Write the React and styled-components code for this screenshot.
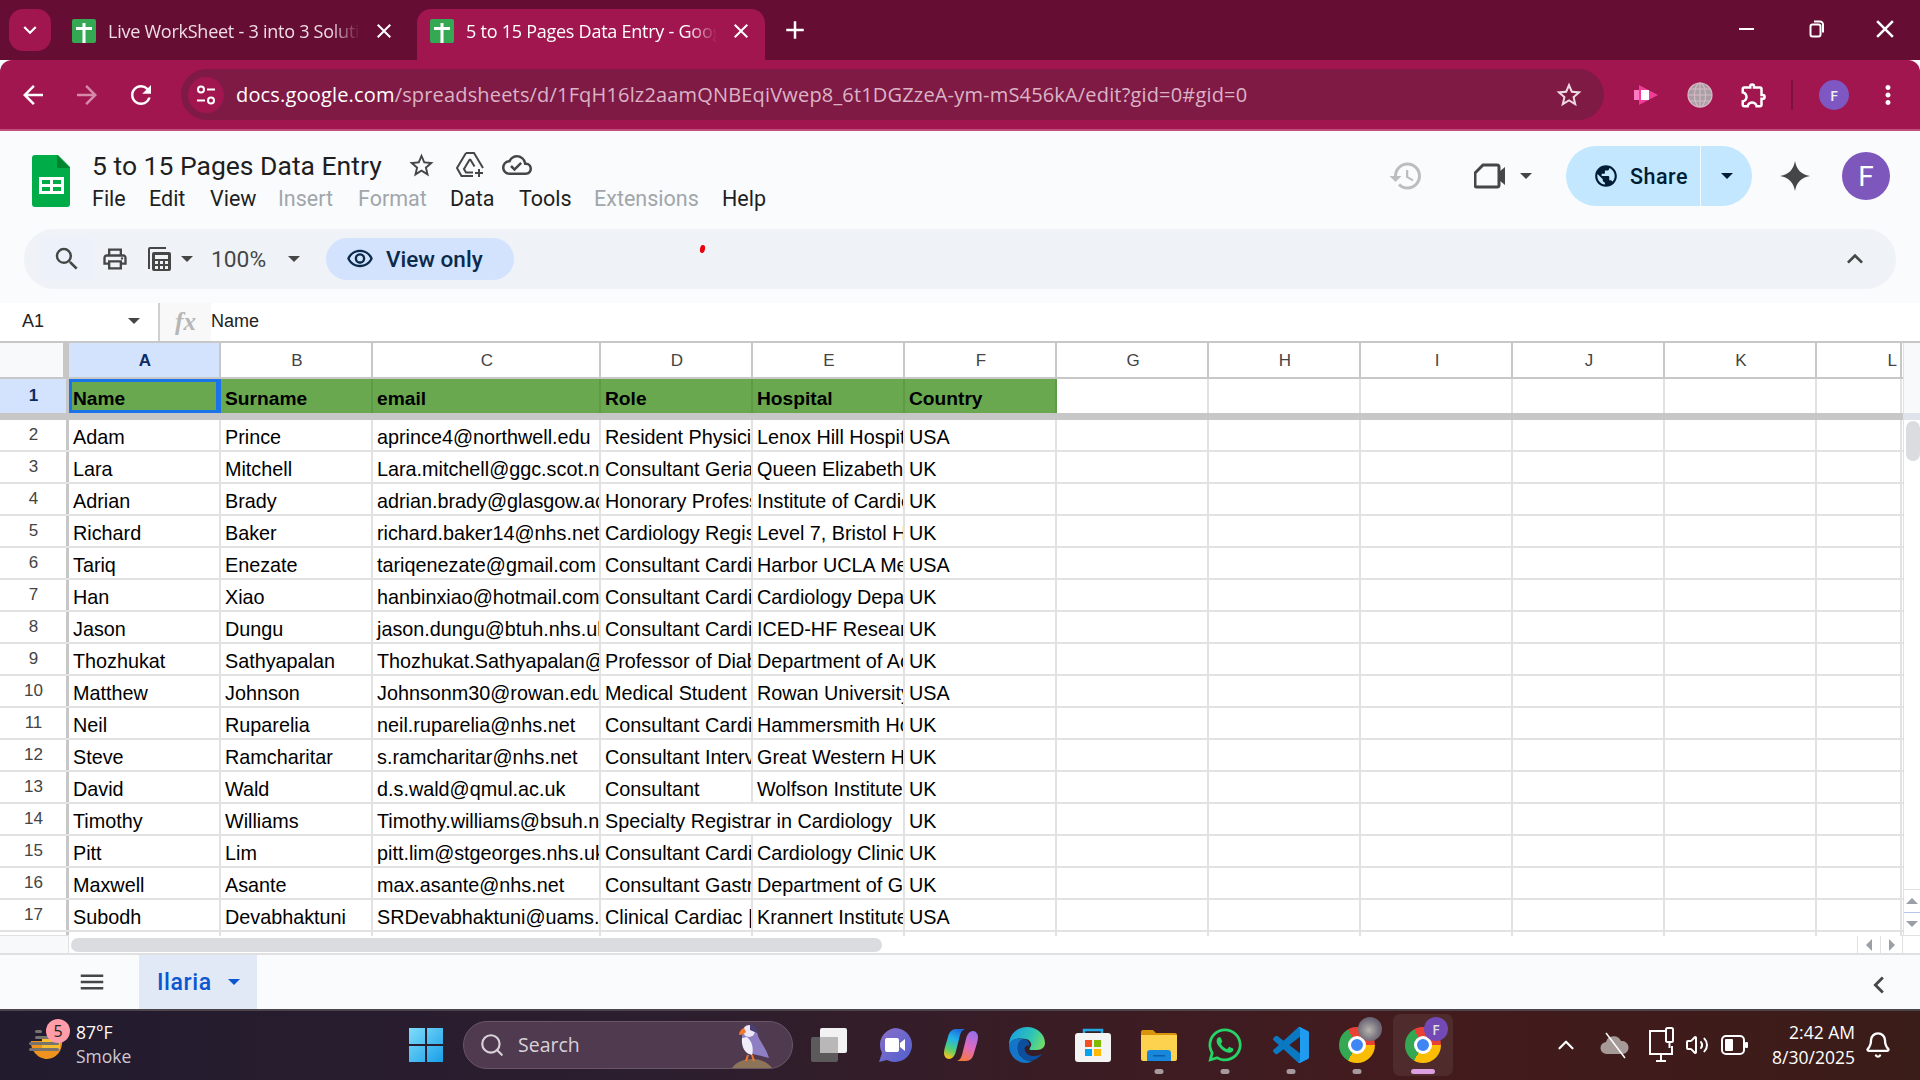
import React from 'react';
import styled, { createGlobalStyle } from 'styled-components';
import {
  MdAdd, MdArrowBack, MdArrowForward, MdClose, MdHistory, MdKeyboardArrowDown, MdKeyboardArrowLeft,
  MdKeyboardArrowUp, MdMenu, MdMoreVert, MdOutlineCloudDone, MdOutlineExtension,
  MdOutlinePrint, MdOutlineStarBorder, MdOutlineVisibility, MdPublic, MdRefresh, MdSearch, MdStarBorder,
} from 'react-icons/md';
import { FaWhatsapp } from 'react-icons/fa';
import { Bell, ChevronUp, Search, Volume2 } from 'lucide-react';

const UI_FONT = '"Open Sans", "Noto Sans", sans-serif';
const DOC_FONT = 'Roboto, "Noto Sans", sans-serif';
const CELL_FONT = '"Liberation Sans", Arial, sans-serif';

const GlobalStyle = createGlobalStyle`
  html, body { margin: 0; padding: 0; background: #fff; }
  * { box-sizing: border-box; }
`;

const COLUMNS = [
  ['A', 152], ['B', 152], ['C', 228], ['D', 152], ['E', 152], ['F', 152],
  ['G', 152], ['H', 152], ['I', 152], ['J', 152], ['K', 152], ['L', 85],
];

const HEADINGS = ['Name', 'Surname', 'email', 'Role', 'Hospital', 'Country'];

const PEOPLE = [
  ['Adam', 'Prince', 'aprince4@northwell.edu', 'Resident Physician', 'Lenox Hill Hospital', 'USA'],
  ['Lara', 'Mitchell', 'Lara.mitchell@ggc.scot.nhs.uk', 'Consultant Geriatrician', 'Queen Elizabeth University', 'UK'],
  ['Adrian', 'Brady', 'adrian.brady@glasgow.ac.uk', 'Honorary Professor', 'Institute of Cardiovascular', 'UK'],
  ['Richard', 'Baker', 'richard.baker14@nhs.net', 'Cardiology Registrar', 'Level 7, Bristol Heart', 'UK'],
  ['Tariq', 'Enezate', 'tariqenezate@gmail.com', 'Consultant Cardiologist', 'Harbor UCLA Medical', 'USA'],
  ['Han', 'Xiao', 'hanbinxiao@hotmail.com', 'Consultant Cardiologist', 'Cardiology Department', 'UK'],
  ['Jason', 'Dungu', 'jason.dungu@btuh.nhs.uk', 'Consultant Cardiologist', 'ICED-HF Research', 'UK'],
  ['Thozhukat', 'Sathyapalan', 'Thozhukat.Sathyapalan@hull.ac.uk', 'Professor of Diabetes', 'Department of Academic', 'UK'],
  ['Matthew', 'Johnson', 'Johnsonm30@rowan.edu', 'Medical Student', 'Rowan University', 'USA'],
  ['Neil', 'Ruparelia', 'neil.ruparelia@nhs.net', 'Consultant Cardiologist', 'Hammersmith Hospital', 'UK'],
  ['Steve', 'Ramcharitar', 's.ramcharitar@nhs.net', 'Consultant Interventional', 'Great Western Hospital', 'UK'],
  ['David', 'Wald', 'd.s.wald@qmul.ac.uk', 'Consultant', 'Wolfson Institute', 'UK'],
  ['Timothy', 'Williams', 'Timothy.williams@bsuh.nhs.uk', 'Specialty Registrar in Cardiology', '', 'UK'],
  ['Pitt', 'Lim', 'pitt.lim@stgeorges.nhs.uk', 'Consultant Cardiologist', 'Cardiology Clinic', 'UK'],
  ['Maxwell', 'Asante', 'max.asante@nhs.net', 'Consultant Gastroenterologist', 'Department of Gastro', 'UK'],
  ['Subodh', 'Devabhaktuni', 'SRDevabhaktuni@uams.edu', 'Clinical Cardiac | Electrophysiology', 'Krannert Institute', 'USA'],
];

const Page = styled.div`
  width: 1920px;
  height: 1080px;
  display: flex;
  flex-direction: column;
  overflow: hidden;
  background: #f9fbfd;
`;

/* browser chrome */
const TabStrip = styled.div`
  height: 60px;
  flex: none;
  background: #650d33;
  display: flex;
  align-items: flex-end;
  color: #fff;
  font-family: ${UI_FONT};
`;

const TabListButton = styled.div`
  width: 42px;
  height: 42px;
  margin: 0 9px 9px 9px;
  border-radius: 14px;
  background: #a1164f;
  display: flex;
  align-items: center;
  justify-content: center;
  font-size: 26px;
`;

const Tab = styled.div`
  width: ${p => (p.$active ? 348 : 357)}px;
  height: 51px;
  padding: 0 12px 8px ${p => (p.$active ? 13 : 12)}px;
  border-radius: 14px 14px 0 0;
  background: ${p => (p.$active ? '#a1164f' : 'transparent')};
  display: flex;
  align-items: center;
  color: ${p => (p.$active ? '#fff' : '#f0dde5')};
  svg.close { flex: none; font-size: 24px; color: #fff; }
`;

const TabTitle = styled.span`
  width: ${p => p.$w}px;
  margin-left: 12px;
  margin-right: ${p => p.$gap}px;
  font-size: 18px;
  letter-spacing: -0.25px;
  white-space: nowrap;
  overflow: hidden;
  -webkit-mask-image: linear-gradient(90deg, #000 88%, transparent);
  mask-image: linear-gradient(90deg, #000 88%, transparent);
`;

const NewTab = styled.div`
  width: 36px;
  height: 36px;
  margin: 0 0 12px 12px;
  font-size: 30px;
  display: flex;
  align-items: center;
  justify-content: center;
`;

const WindowControls = styled.div`
  margin-left: auto;
  height: 60px;
  display: flex;
  align-items: center;
  padding: 0 20px 2px 0;
  svg:nth-child(2) { margin: 0 45px 0 54px; }
`;

const Toolbar = styled.div`
  height: 71px;
  flex: none;
  background: #a1164f;
  border-radius: 12px 12px 0 0;
  border-bottom: 2px solid #c04f7c;
  display: flex;
  align-items: center;
  padding: 0 0 0 11px;
  gap: 10px;
  color: #fff;
`;

const NavButton = styled.div`
  width: 44px;
  height: 44px;
  display: flex;
  align-items: center;
  justify-content: center;
  font-size: 30px;
  color: ${p => (p.$dim ? '#d58aa8' : '#fff')};
`;

const Omnibox = styled.div`
  width: 1423px;
  height: 51px;
  margin: 0 10px 0 8px;
  border-radius: 26px;
  background: #7f1a45;
  display: flex;
  align-items: center;
  padding: 0 20px 0 7px;
`;

const SiteInfo = styled.div`
  width: 36px;
  height: 36px;
  border-radius: 50%;
  background: #a1164f;
  display: flex;
  align-items: center;
  justify-content: center;
  flex: none;
`;

const Url = styled.div`
  margin-left: 12px;
  font-family: ${UI_FONT};
  font-size: 20px;
  letter-spacing: 0.17px;
  color: #dbb3c5;
  white-space: nowrap;
  b { font-weight: 400; color: #fff; }
`;

const OmniStar = styled(MdStarBorder)`
  margin-left: auto;
  font-size: 30px;
  color: #eed8e1;
`;

const ToolbarDivider = styled.div`
  width: 2px;
  height: 30px;
  background: #7d1040;
  margin: 0 9px 0 5px;
`;

const SmallAvatar = styled.div`
  width: 30px;
  height: 30px;
  margin: 0 7px;
  border-radius: 50%;
  background: #7e57c2;
  color: #eee;
  font: 600 15px ${UI_FONT};
  display: flex;
  align-items: center;
  justify-content: center;
`;

/* docs header */
const DocHeader = styled.header`
  height: 98px;
  flex: none;
  display: flex;
  padding: 24px 30px 0 32px;
`;

const DocTitleBlock = styled.div`
  margin-left: 22px;
  display: flex;
  flex-direction: column;
`;

const TitleRow = styled.div`
  height: 36px;
  margin-top: -8px;
  display: flex;
  align-items: center;
  color: #444746;
  svg { flex: none; }
`;

const DocTitle = styled.div`
  font: 400 26.5px ${DOC_FONT};
  color: #1f1f1f;
  width: 300px;
  white-space: nowrap;
  margin-right: 15px;
`;

const MenuBar = styled.nav`
  display: flex;
  margin-top: 3px;
`;

const MenuItem = styled.span`
  width: ${p => p.$w}px;
  font: 400 21.5px ${DOC_FONT};
  color: ${p => (p.$disabled ? '#a1a6ab' : '#1f1f1f')};
`;

const HeaderActions = styled.div`
  margin-left: auto;
  display: flex;
  align-items: center;
  height: 60px;
  margin-top: -9px;
  color: #444746;
`;

const Spacer = styled.span`
  width: ${p => p.$w}px;
  flex: none;
`;

const Caret = styled.span`
  width: 0;
  height: 0;
  border-left: ${p => p.$size || 6}px solid transparent;
  border-right: ${p => p.$size || 6}px solid transparent;
  border-top: ${p => p.$size || 6}px solid ${p => p.$color || '#444746'};
  flex: none;
`;

const ShareButton = styled.div`
  width: 186px;
  height: 60px;
  margin: 0 27px 0 34px;
  border-radius: 30px;
  background: #c2e7ff;
  color: #001d35;
  display: flex;
  align-items: center;
`;

const ShareLabel = styled.div`
  width: 135px;
  height: 100%;
  border-right: 1px solid #f3fbff;
  padding-left: 27px;
  display: flex;
  align-items: center;
  gap: 11px;
  font: 500 21.5px ${DOC_FONT};
  letter-spacing: 0.5px;
`;

const ShareCaret = styled.div`
  flex: 1;
  display: flex;
  justify-content: center;
`;

const ProfileBadge = styled.div`
  width: 48px;
  height: 48px;
  margin-left: 31px;
  border-radius: 50%;
  background: #7e57bd;
  color: #fff;
  font: 400 28px ${DOC_FONT};
  display: flex;
  align-items: center;
  justify-content: center;
`;

/* sheets toolbar */
const ActionBar = styled.div`
  position: relative;
  height: 60px;
  flex: none;
  margin: 0 24px;
  border-radius: 30px;
  background: #eff3f8;
  display: flex;
  align-items: center;
  color: #444746;
`;

const SearchTool = styled.div`
  width: 53px;
  height: 44px;
  margin-left: 16px;
  background: #edf2fa;
  display: flex;
  align-items: center;
  justify-content: center;
`;

const ZoomLabel = styled.span`
  width: 77px;
  margin-left: 18px;
  font: 400 22.8px ${DOC_FONT};
  color: #444746;
`;

const ViewOnly = styled.div`
  width: 188px;
  height: 42px;
  margin-left: 26px;
  border-radius: 21px;
  background: #d3e3fd;
  color: #0b2a4c;
  display: flex;
  align-items: center;
  padding-left: 20px;
  gap: 12px;
  font: 500 22.5px ${DOC_FONT};
`;

const RedMark = styled.span`
  position: absolute;
  left: 676px;
  top: 16px;
  width: 5px;
  height: 8px;
  border-radius: 50%;
  background: #e8000d;
  transform: rotate(12deg);
`;

const CollapseBar = styled(MdKeyboardArrowUp)`
  margin-left: auto;
  margin-right: 25px;
  font-size: 32px;
`;

/* formula bar */
const FormulaBar = styled.div`
  height: 40px;
  flex: none;
  margin-top: 14px;
  background: #fff;
  border-bottom: 2px solid #c7c7c7;
  display: flex;
  align-items: center;
  font: 400 18px ${CELL_FONT};
  color: #222;
`;

const NameBox = styled.div`
  width: 158px;
  height: 100%;
  padding: 0 18px 2px 22px;
  display: flex;
  align-items: center;
  justify-content: space-between;
`;

const FxBox = styled.div`
  width: 53px;
  height: 100%;
  background: #f8f8f8;
  border-left: 2px solid #d0d0d0;
  background-clip: padding-box;
  display: flex;
  align-items: center;
  justify-content: center;
  font: italic 700 25px "Liberation Serif", serif;
  color: #b6b6b6;
`;

const FormulaText = styled.span`
  margin: -1px 0 0 0;
`;

/* grid */
const GridArea = styled.div`
  height: 592px;
  flex: none;
  display: flex;
  background: #fff;
  font-family: ${CELL_FONT};
`;

const Sheet = styled.div`
  width: 1903px;
  flex: none;
`;

const Row = styled.div`
  display: flex;
  height: ${p => p.$h}px;
  border-bottom: ${p => p.$line || '2px solid #e2e2e2'};
`;

const RowNumber = styled.div`
  width: 69px;
  flex: none;
  border-right: ${p => (p.$thick ? '6px solid #c7c7c7' : '3px solid #c7c7c7')};
  background: ${p => (p.$on ? '#d3e3fd' : '#fff')};
  display: flex;
  align-items: center;
  justify-content: center;
  padding: 0 0 0 1px;
  font-size: 17px;
  font-weight: ${p => (p.$on ? 700 : 400)};
  color: ${p => (p.$on ? '#0b2a66' : '#444')};
  ${p => p.$corner && 'background: #f8f9fa;'}
`;

const ColumnHead = styled.div`
  flex: none;
  width: ${p => p.$w}px;
  border-right: 2px solid #c7c7c7;
  background: ${p => (p.$on ? '#d3e3fd' : '#fff')};
  display: flex;
  align-items: center;
  justify-content: ${p => (p.$end ? 'flex-end' : 'center')};
  padding: 2px ${p => (p.$end ? 3 : 0)}px 0 2px;
  font-size: 17px;
  font-weight: ${p => (p.$on ? 700 : 400)};
  color: ${p => (p.$on ? '#0b2a66' : '#444')};
`;

const Cell = styled.div`
  flex: none;
  width: ${p => p.$w}px;
  height: 100%;
  padding: ${p => (p.$head ? 6 : 4)}px 0 0 4px;
  border-right: 2px solid ${p => (p.$open ? 'transparent' : p.$head ? '#5f9a47' : '#e2e2e2')};
  background: ${p => (p.$head ? '#6aa84f' : '#fff')};
  font-size: ${p => (p.$head ? 19.2 : 19.8)}px;
  font-weight: ${p => (p.$head ? 700 : 400)};
  line-height: 27px;
  color: #000;
  white-space: nowrap;
  overflow: ${p => (p.$spill ? 'visible' : 'hidden')};
  position: relative;
  z-index: ${p => (p.$spill ? 1 : 0)};
  ${p => p.$selected && 'box-shadow: inset 0 0 0 3px #1a73e8; border-right-color: #1a73e8;'}
`;

const VScroll = styled.div`
  flex: 1;
  display: flex;
  flex-direction: column;
  border-left: 1px solid #e1e1e1;
`;

const VScrollCap = styled.div`
  background: #f8f9fa;
  border-bottom: 7px solid #dfe3eb;
  height: 77px;
`;

const VScrollThumb = styled.div`
  width: 14px;
  height: 40px;
  margin: 1px 0 0 2px;
  border-radius: 7px;
  background: #dadce0;
`;

const VScrollArrow = styled.div`
  height: 23px;
  display: flex;
  align-items: center;
  justify-content: center;
  margin-top: ${p => (p.$first ? 'auto' : 0)};
  border-top: 1px solid ${p => (p.$first ? '#e1e1e1' : '#b9c4ec')};
`;

const TurnedCaret = styled(Caret)`
  transform: rotate(${p => p.$turn || 180}deg);
`;

const HScroll = styled.div`
  height: 20px;
  flex: none;
  background: #fff;
  border-top: 1px solid #e1e1e1;
  border-bottom: 2px solid #e0e0e0;
  display: flex;
  align-items: center;
`;

const HScrollCorner = styled.div`
  width: 69px;
  height: 100%;
  background: #f8f9fa;
  border-right: 1px solid #e1e1e1;
`;

const HScrollThumb = styled.div`
  width: 811px;
  height: 14px;
  margin-left: 2px;
  border-radius: 7px;
  background: #dadce0;
`;

const HScrollArrow = styled.div`
  width: 23px;
  height: 100%;
  border-left: 1px solid #e1e1e1;
  display: flex;
  align-items: center;
  justify-content: center;
  margin-left: ${p => (p.$first ? 'auto' : 0)};
  &:last-child { margin-right: 17px; border-right: 1px solid #e1e1e1; }
`;

/* sheet tabs */
const SheetTabs = styled.div`
  height: 54px;
  flex: none;
  background: #f9fbfd;
  display: flex;
  align-items: center;
`;

const AllSheets = styled(MdMenu)`
  margin-left: 77px;
  font-size: 30px;
  color: #444746;
`;

const SheetTab = styled.div`
  width: 118px;
  height: 100%;
  margin-left: 32px;
  padding-left: 18px;
  background: #e1e9f7;
  color: #0b57d0;
  display: flex;
  align-items: center;
  gap: 16px;
  font: 500 23px ${DOC_FONT};
  letter-spacing: 0.6px;
`;

const ExploreArrow = styled(MdKeyboardArrowLeft)`
  margin-left: auto;
  margin-right: 24px;
  margin-top: 6px;
  font-size: 34px;
  color: #444746;
`;

/* windows taskbar */
const Taskbar = styled.footer`
  height: 72px;
  flex: none;
  border-top: 2px solid #4b444a;
  padding-bottom: 2px;
  background: linear-gradient(90deg, #221b2e 0%, #2c1e2e 35%, #3d1c22 60%, #431b1d 75%, #3a1c18 100%);
  display: flex;
  align-items: center;
  color: #fff;
  font-family: ${UI_FONT};
`;

const Weather = styled.div`
  position: relative;
  width: 408px;
  height: 100%;
  flex: none;
  padding-left: 28px;
  display: flex;
  align-items: center;
  gap: 10px;
`;

const WeatherBadge = styled.span`
  position: absolute;
  left: 46px;
  top: 8px;
  width: 24px;
  height: 24px;
  border-radius: 50%;
  background: #ff9da8;
  color: #222;
  font-size: 16px;
  display: flex;
  align-items: center;
  justify-content: center;
`;

const WeatherText = styled.div`
  font-size: 17.5px;
  line-height: 24px;
  margin-top: -2px;
  span { display: block; color: #cfc8d0; }
`;

const StartSlot = styled.div`
  width: 36px;
  flex: none;
  display: flex;
`;

const SearchBox = styled.div`
  position: relative;
  width: 330px;
  height: 48px;
  margin: 0 3px 1px 19px;
  flex: none;
  border-radius: 24px;
  border: 1px solid #6a5666;
  background: #4f3a50;
  display: flex;
  align-items: center;
  padding-left: 15px;
  gap: 13px;
  font-size: 19.5px;
  color: #d9d2d8;
`;

const PuffinSlot = styled.svg`
  position: absolute;
  right: 16px;
  bottom: 0;
`;

const TaskSlot = styled.div`
  position: relative;
  width: 66px;
  height: 62px;
  display: flex;
  align-items: center;
  justify-content: center;
  flex: none;
  ${p => p.$active && 'background: rgba(255,255,255,.07); border-radius: 7px; width: 60px; margin: 0 3px;'}
`;

const RunningDot = styled.span`
  position: absolute;
  left: 50%;
  bottom: 2px;
  transform: translateX(-50%);
  width: ${p => (p.$active ? 24 : 9)}px;
  height: 5px;
  border-radius: 3px;
  background: ${p => (p.$active ? '#dc9fe2' : '#a79a9e')};
`;

const ChromeMark = styled.span`
  position: relative;
  width: 36px;
  height: 36px;
  border-radius: 50%;
  background: conic-gradient(#e94235 0 90deg, #fbbc04 90deg 210deg, #34a853 210deg 330deg, #e94235 330deg 360deg);
  display: block;
  &::after {
    content: '';
    position: absolute;
    left: 9px;
    top: 9px;
    width: 18px;
    height: 18px;
    border-radius: 50%;
    background: #3f85f4;
    border: 3px solid #fff;
    box-sizing: border-box;
  }
`;

const ChromeProfile = styled.span`
  position: absolute;
  z-index: 1;
  right: ${p => p.$right}px;
  top: 3px;
  width: 24px;
  height: 24px;
  border-radius: 50%;
  background: ${p => p.$bg};
  color: #ddd;
  font: 600 14px ${UI_FONT};
  display: flex;
  align-items: center;
  justify-content: center;
`;

const Tray = styled.div`
  flex: 1;
  height: 100%;
  display: flex;
  align-items: center;
  padding-left: 95px;
  color: #fff;
`;

const TrayIcon = styled.div`
  width: ${p => p.$w}px;
  margin-left: ${p => p.$gap || 0}px;
  display: flex;
  justify-content: center;
  flex: none;
`;

const Clock = styled.div`
  width: 94px;
  flex: none;
  text-align: right;
  font-size: 17.5px;
  line-height: 25px;
  white-space: nowrap;
  margin-top: -1px;
`;

const BellSlot = styled.div`
  width: 46px;
  flex: none;
  display: flex;
  justify-content: center;
`;

const SheetFavicon = () => (
  <svg width="24" height="24" viewBox="0 0 24 24" style={{ flex: 'none' }}>
    <rect width="24" height="24" rx="2" fill="#34a853" />
    <rect x="10.5" y="4" width="3" height="20" fill="#fff" />
    <rect x="4" y="8" width="16" height="3" fill="#fff" />
  </svg>
);

const SheetsLogo = () => (
  <svg width="38" height="52" viewBox="0 0 38 52" style={{ flex: 'none' }}>
    <path d="M3 0h23l12 12v37a3 3 0 0 1-3 3H3a3 3 0 0 1-3-3V3a3 3 0 0 1 3-3Z" fill="#00ac47" />
    <path d="M25 0l13 13H25Z" fill="#00832d" />
    <path d="M7 22h25v17H7Zm3 3v4h8v-4Zm11 0v4h8v-4Zm-11 7v4h8v-4Zm11 0v4h8v-4Z" fill="#fff" fillRule="evenodd" />
  </svg>
);

const SiteTune = () => (
  <svg width="24" height="24" viewBox="0 0 24 24" fill="none" stroke="#fff" strokeWidth="2">
    <circle cx="7" cy="6.5" r="3" />
    <path d="M13 6.5h8M3 17.5h8" />
    <circle cx="17" cy="17.5" r="3" />
  </svg>
);

const Minimize = () => (
  <svg width="16" height="16" viewBox="0 0 16 16"><rect x="0" y="7" width="15" height="2" fill="#fff" /></svg>
);

const Restore = () => (
  <svg width="16" height="18" viewBox="0 0 16 18" fill="none" stroke="#fff" strokeWidth="2">
    <rect x="1.5" y="4.5" width="10" height="12" rx="2" />
    <path d="M5 1.5h6a3 3 0 0 1 3 3v8" />
  </svg>
);

const Recorder = () => (
  <svg width="26" height="26" viewBox="0 0 26 26">
    <path d="M1 8h14v10H1Z" fill="#ff78c2" />
    <path d="M6 3l0 20 19-10Z" fill="#ef3d9a" />
    <rect x="8" y="8" width="8" height="10" fill="#fff" />
  </svg>
);

const GlobeExt = () => (
  <svg width="26" height="26" viewBox="0 0 26 26" fill="none" stroke="#d7b9c5" strokeWidth="1.2">
    <circle cx="13" cy="13" r="12" fill="#a8a0a4" />
    <ellipse cx="13" cy="13" rx="5.5" ry="12" />
    <path d="M1 13h24M3 7h20M3 19h20M13 1v24" />
  </svg>
);

const DriveAdd = () => (
  <svg width="30" height="30" viewBox="0 0 30 30" fill="none" stroke="#444746" strokeWidth="2" style={{ marginLeft: 19 }}>
    <path d="M11 3h8l9 15M11 3 2 18l4.500 8H18" />
    <path d="M15 9 9 19l2 3.500h7M15 9l4.500 7.500" />
    <path d="M24 19v8M20 23h8" />
  </svg>
);

const CalcIcon = () => (
  <svg width="28" height="28" viewBox="0 0 28 28">
    <path d="M3 24V4a2 2 0 0 1 2-2h16v2H5v20Z" fill="#444746" />
    <rect x="7" y="7" width="19" height="19" rx="2" fill="#444746" />
    <rect x="10" y="10" width="13" height="4" fill="#eff3f8" />
    <path d="M10 16h3v3h-3Zm5 0h3v3h-3Zm5 0h3v3h-3Zm-10 5h3v3h-3Zm5 0h3v3h-3Zm5 0h3v3h-3Z" fill="#eff3f8" />
  </svg>
);

const MeetCamera = () => (
  <svg width="32" height="26" viewBox="0 0 32 26" fill="none">
    <path d="M9 2h14a2 2 0 0 1 2 2v18a2 2 0 0 1-2 2H3a2 2 0 0 1-2-2V10Z" stroke="#444746" strokeWidth="3" />
    <path d="M25 9l6-5v18l-6-5Z" fill="#444746" />
  </svg>
);

const Spark = () => (
  <svg width="32" height="32" viewBox="0 0 32 32">
    <path d="M16 1c1.5 8.5 6 13.500 15 15-9 1.500-13.500 6.500-15 15-1.500-8.500-6-13.500-15-15 9-1.500 13.500-6.500 15-15Z" fill="#444746" />
  </svg>
);

const WeatherIcon = () => (
  <svg width="38" height="36" viewBox="0 0 38 36">
    <path d="M3 14h31c1 9-6 18-15 18S2 23 3 14Z" fill="#f0921e" />
    <path d="M14 12h18v10H14Z" fill="#f7bd30" />
    <g fill="#77736f">
      <rect x="7" y="3" width="7" height="3" rx="1.500" />
      <rect x="7" y="9" width="16" height="3" rx="1.500" />
      <rect x="1" y="15" width="30" height="3" rx="1.500" />
      <rect x="1" y="21" width="30" height="3" rx="1.500" />
    </g>
  </svg>
);

const WindowsLogo = () => (
  <svg width="36" height="36" viewBox="0 0 36 36">
    <defs>
      <linearGradient id="win" x1="0" y1="0" x2="1" y2="1">
        <stop offset="0" stopColor="#7fdcfb" />
        <stop offset="1" stopColor="#1a9fe8" />
      </linearGradient>
    </defs>
    <path d="M1 1h16v16H1Zm18 0h16v16H19ZM1 19h16v16H1Zm18 0h16v16H19Z" fill="url(#win)" />
  </svg>
);

const Puffin = () => (
  <PuffinSlot width="48" height="46" viewBox="0 0 48 46">
    <path d="M4 46c4-6 12-9 20-9s16 3 20 9Z" fill="#8d7358" />
    <path d="M14 14c0-6 4-10 8-10s7 4 8 10c3 7 9 14 11 22-7-2-12-3-17-4-6-2-10-10-10-18Z" fill="#8e7fc4" />
    <path d="M14 16c-1 9 3 16 10 17 2-6 0-14-5-18Z" fill="#f0eef8" />
    <circle cx="21" cy="9" r="6" fill="#ece6f5" />
    <path d="M22 2c5 1 7 4 7 9l-7-3Z" fill="#4a3f73" />
    <path d="M16 6c-3 1-5 4-5 7 3 0 5-1 7-3Z" fill="#f4772a" />
    <path d="M20 33l-2 6m6-6 2 6" stroke="#f4772a" strokeWidth="2" />
  </PuffinSlot>
);

const TaskView = () => (
  <svg width="36" height="34" viewBox="0 0 36 34">
    <rect x="0" y="9" width="27" height="25" rx="2" fill="#5c5a5b" />
    <rect x="9" y="0" width="27" height="25" rx="2" fill="#f2f2f2" />
    <rect x="9" y="9" width="18" height="16" fill="#b9b7b8" />
  </svg>
);

const MeetIcon = () => (
  <svg width="34" height="34" viewBox="0 0 34 34">
    <defs>
      <linearGradient id="meet" x1="0" y1="0" x2="1" y2="1">
        <stop offset="0" stopColor="#8a70c9" />
        <stop offset="1" stopColor="#5060cf" />
      </linearGradient>
    </defs>
    <path d="M17 0a17 17 0 1 1-8 32l-8 2 3-9A17 17 0 0 1 17 0Z" fill="url(#meet)" />
    <rect x="7" y="10" width="14" height="14" rx="2" fill="#fff" />
    <path d="M22 15l5-4v12l-5-4Z" fill="#fff" />
  </svg>
);

const CopilotIcon = () => (
  <svg width="34" height="34" viewBox="0 0 34 34">
    <defs>
      <linearGradient id="copL" x1="0.6" y1="0" x2="0.3" y2="1">
        <stop offset="0" stopColor="#1b6fe0" />
        <stop offset=".35" stopColor="#22b4e8" />
        <stop offset=".7" stopColor="#53cf72" />
        <stop offset="1" stopColor="#f6c21c" />
      </linearGradient>
      <linearGradient id="copR" x1="0.6" y1="0" x2="0.3" y2="1">
        <stop offset="0" stopColor="#9a6fe8" />
        <stop offset=".5" stopColor="#e069c0" />
        <stop offset="1" stopColor="#f5793c" />
      </linearGradient>
    </defs>
    <path d="M12 1h9c-3 1-4 3-5 6l-4 16c-1 4-3 8-7 8-3 0-5-3-5-6 0-2 .5-4 1-6l3-10C5 4 8 1 12 1Z" fill="url(#copL)" />
    <path d="M22 33h-9c3-1 4-3 5-6l4-16c1-4 3-8 7-8 3 0 5 3 5 6 0 2-.5 4-1 6l-3 10C29 30 26 33 22 33Z" fill="url(#copR)" />
  </svg>
);

const EdgeIcon = () => (
  <svg width="36" height="36" viewBox="0 0 36 36">
    <defs>
      <linearGradient id="edgeA" x1="0" y1="0.3" x2="1" y2="0.6">
        <stop offset="0" stopColor="#1b9de2" />
        <stop offset=".6" stopColor="#2ec5b5" />
        <stop offset="1" stopColor="#6fdc6a" />
      </linearGradient>
    </defs>
    <path d="M0 18C0 7 8 0 18 0c10 0 18 7 18 16 0 4-3 7-8 7h-7c-1 0 0-3 1-4 1-3-1-6-5-7C10 11 3 11 0 18Z" fill="url(#edgeA)" />
    <path d="M0 18c3-7 10-7 15-6-5 1-7 6-6 12 1 6 8 11 15 10-3 1-5 2-7 2C7 36 0 28 0 18Z" fill="#1476c9" />
    <path d="M9 24c-1-6 1-11 6-12 4 1 6 4 5 7-3-1-5 1-4 5 1 3 5 5 9 5 3 0 6-1 8-2-3 4-8 7-13 7-5-1-10-5-11-10Z" fill="#0c4f9e" />
  </svg>
);

const StoreIcon = () => (
  <svg width="36" height="34" viewBox="0 0 36 34">
    <path d="M9 7V2h18v5" fill="none" stroke="#24a9e8" strokeWidth="2.500" />
    <rect y="5" width="36" height="29" rx="3" fill="#f4f4f4" />
    <rect x="10" y="12" width="7" height="7" fill="#f25022" />
    <rect x="19" y="12" width="7" height="7" fill="#7fba00" />
    <rect x="10" y="21" width="7" height="7" fill="#00a4ef" />
    <rect x="19" y="21" width="7" height="7" fill="#ffb900" />
  </svg>
);

const FolderIcon = () => (
  <svg width="36" height="32" viewBox="0 0 36 32">
    <path d="M0 3a2 2 0 0 1 2-2h10l3 3h19a2 2 0 0 1 2 2v4H0Z" fill="#d8940a" />
    <path d="M0 6h36v24a2 2 0 0 1-2 2H2a2 2 0 0 1-2-2Z" fill="#fcd24f" />
    <path d="M6 32V24a3 3 0 0 1 3-3h18a3 3 0 0 1 3 3v8Z" fill="#1886db" />
    <rect x="12" y="26" width="12" height="1.500" fill="#0b5ea8" />
  </svg>
);

const VsCodeIcon = () => (
  <svg width="36" height="36" viewBox="0 0 100 100">
    <path d="M96.4 10.8 75.800.9a6.200 6.200 0 0 0-7.100 1.200L29.400 38 12.300 25a4.200 4.200 0 0 0-5.300.2L1.500 30.300a4.200 4.200 0 0 0 0 6.200L16.300 50 1.400 63.500a4.200 4.200 0 0 0 0 6.200L7 74.800a4.200 4.200 0 0 0 5.300.2l17.100-13 39.300 35.900a6.200 6.200 0 0 0 7.100 1.200l20.600-9.900a6.200 6.200 0 0 0 3.500-5.600V16.400a6.200 6.200 0 0 0-3.500-5.600ZM75 72.700 45.200 50 75 27.300Z" fill="#0b78c2" />
    <path d="M70 1.500a6 6 0 0 1 5.800-.6l20.600 9.900a6.200 6.200 0 0 1 3.500 5.600v67.200a6.200 6.200 0 0 1-3.500 5.600l-20.600 9.900a6 6 0 0 1-5.800-.6Q75 96 75 93V7Q75 4 70 1.500Z" fill="#1f9cf0" />
  </svg>
);

const TrayCloud = () => (
  <svg width="30" height="30" viewBox="0 0 30 30">
    <path d="M7 24a6 6 0 0 1-1-12 8 8 0 0 1 15-1 6.500 6.500 0 0 1 2 13Z" fill="#a59a97" />
    <path d="M6 3l19 25" stroke="#fff" strokeWidth="1.500" />
  </svg>
);

const TrayNetwork = () => (
  <svg width="30" height="38" viewBox="0 0 30 38" fill="none" stroke="#fff" strokeWidth="2">
    <path d="M17 5H2v23h22v-8" />
    <path d="M8 35h10M13 28v7" />
    <rect x="18" y="2" width="7" height="14" rx="1.500" />
    <path d="M21.500 16v6" />
  </svg>
);

const TrayBattery = () => (
  <svg width="28" height="22" viewBox="0 0 28 22">
    <rect x="1" y="2" width="22" height="18" rx="4" fill="none" stroke="#fff" strokeWidth="2" />
    <rect x="4" y="5" width="8" height="12" rx="1" fill="#fff" />
    <rect x="24" y="8" width="3" height="6" rx="1" fill="#fff" />
  </svg>
);

const menu = [
  ['File', 57], ['Edit', 61], ['View', 68], ['Insert', 80, true], ['Format', 92, true],
  ['Data', 69], ['Tools', 75], ['Extensions', 128, true], ['Help', 50],
];

const App = () => (
  <Page>
    <GlobalStyle />

    <TabStrip>
      <TabListButton><MdKeyboardArrowDown /></TabListButton>
      <Tab>
        <SheetFavicon />
        <TabTitle $w={252} $gap={12}>Live WorkSheet - 3 into 3 Solutions</TabTitle>
        <MdClose className="close" />
      </Tab>
      <Tab $active>
        <SheetFavicon />
        <TabTitle $w={252} $gap={12}>5 to 15 Pages Data Entry - Google Sheets</TabTitle>
        <MdClose className="close" />
      </Tab>
      <NewTab><MdAdd /></NewTab>
      <WindowControls>
        <Minimize />
        <Restore />
        <MdClose size={30} />
      </WindowControls>
    </TabStrip>

    <Toolbar>
      <NavButton><MdArrowBack /></NavButton>
      <NavButton $dim><MdArrowForward /></NavButton>
      <NavButton><MdRefresh /></NavButton>
      <Omnibox>
        <SiteInfo><SiteTune /></SiteInfo>
        <Url><b>docs.google.com</b>/spreadsheets/d/1FqH16lz2aamQNBEqiVwep8_6t1DGZzeA-ym-mS456kA/edit?gid=0#gid=0</Url>
        <OmniStar />
      </Omnibox>
      <NavButton><Recorder /></NavButton>
      <NavButton><GlobeExt /></NavButton>
      <NavButton><MdOutlineExtension /></NavButton>
      <ToolbarDivider />
      <SmallAvatar>F</SmallAvatar>
      <NavButton><MdMoreVert /></NavButton>
    </Toolbar>

    <DocHeader>
      <SheetsLogo />
      <DocTitleBlock>
        <TitleRow>
          <DocTitle>5 to 15 Pages Data Entry</DocTitle>
          <MdOutlineStarBorder size={29} />
          <DriveAdd />
          <MdOutlineCloudDone size={30} style={{ marginLeft: 17 }} />
        </TitleRow>
        <MenuBar>
          {menu.map(([label, w, off]) => (
            <MenuItem key={label} $w={w} $disabled={off}>{label}</MenuItem>
          ))}
        </MenuBar>
      </DocTitleBlock>
      <HeaderActions>
        <MdHistory size={36} color="#bdbdbd" />
        <Spacer $w={50} />
        <MeetCamera />
        <Spacer $w={14} />
        <Caret />
        <ShareButton>
          <ShareLabel><MdPublic size={26} />Share</ShareLabel>
          <ShareCaret><Caret $color="#001d35" /></ShareCaret>
        </ShareButton>
        <Spark />
        <ProfileBadge>F</ProfileBadge>
      </HeaderActions>
    </DocHeader>

    <ActionBar>
      <SearchTool><MdSearch size={30} /></SearchTool>
      <MdOutlinePrint size={28} style={{ marginLeft: 8 }} />
      <Spacer $w={16} />
      <CalcIcon />
      <Spacer $w={8} />
      <Caret />
      <ZoomLabel>100%</ZoomLabel>
      <Caret />
      <ViewOnly><MdOutlineVisibility size={28} />View only</ViewOnly>
      <RedMark />
      <CollapseBar />
    </ActionBar>

    <FormulaBar>
      <NameBox>A1<Caret /></NameBox>
      <FxBox>fx</FxBox>
      <FormulaText>Name</FormulaText>
    </FormulaBar>

    <GridArea>
      <Sheet>
        <Row $h={36} $line="2px solid #c7c7c7">
          <RowNumber $thick $corner />
          {COLUMNS.map(([letter, w], i) => (
            <ColumnHead key={letter} $w={w} $on={i === 0} $end={letter === 'L'}>{letter}</ColumnHead>
          ))}
        </Row>
        <Row $h={41} $line="7px solid #c7c7c7">
          <RowNumber $on>1</RowNumber>
          {COLUMNS.map(([letter, w], i) => (
            <Cell key={letter} $w={w} $head={i < 6} $selected={i === 0}>{HEADINGS[i]}</Cell>
          ))}
        </Row>
        {PEOPLE.map((person, r) => (
          <Row key={r} $h={32}>
            <RowNumber>{r + 2}</RowNumber>
            {COLUMNS.map(([letter, w], i) => {
              const spills = person[i] && person[i + 1] === '';
              return (
                <Cell key={letter} $w={w} $spill={spills} $open={spills}>{person[i]}</Cell>
              );
            })}
          </Row>
        ))}
        <Row $h={3} $line="none">
          <RowNumber />
          {COLUMNS.map(([letter, w]) => <Cell key={letter} $w={w} />)}
        </Row>
      </Sheet>
      <VScroll>
        <VScrollCap />
        <VScrollThumb />
        <VScrollArrow $first><TurnedCaret $color="#9aa0a6" /></VScrollArrow>
        <VScrollArrow><Caret $color="#9aa0a6" /></VScrollArrow>
      </VScroll>
    </GridArea>

    <HScroll>
      <HScrollCorner />
      <HScrollThumb />
      <HScrollArrow $first><TurnedCaret $turn={90} $color="#9aa0a6" /></HScrollArrow>
      <HScrollArrow><TurnedCaret $turn={270} $color="#9aa0a6" /></HScrollArrow>
    </HScroll>

    <SheetTabs>
      <AllSheets />
      <SheetTab>Ilaria<Caret $color="#0b57d0" /></SheetTab>
      <ExploreArrow />
    </SheetTabs>

    <Taskbar>
      <Weather>
        <WeatherIcon />
        <WeatherBadge>5</WeatherBadge>
        <WeatherText>87°F<span>Smoke</span></WeatherText>
      </Weather>
      <StartSlot><WindowsLogo /></StartSlot>
      <SearchBox>
        <Search size={26} strokeWidth={2} />
        Search
        <Puffin />
      </SearchBox>
      <TaskSlot><TaskView /></TaskSlot>
      <TaskSlot><MeetIcon /></TaskSlot>
      <TaskSlot><CopilotIcon /></TaskSlot>
      <TaskSlot><EdgeIcon /></TaskSlot>
      <TaskSlot><StoreIcon /></TaskSlot>
      <TaskSlot><FolderIcon /><RunningDot /></TaskSlot>
      <TaskSlot><FaWhatsapp size={38} color="#25d366" /><RunningDot /></TaskSlot>
      <TaskSlot><VsCodeIcon /><RunningDot /></TaskSlot>
      <TaskSlot>
        <ChromeMark />
        <ChromeProfile $right={8} $bg="radial-gradient(circle at 45% 55%, #b7b4ae, #6f6a78 60%, #5a4a55)" />
        <RunningDot />
      </TaskSlot>
      <TaskSlot $active>
        <ChromeMark />
        <ChromeProfile $right={5} $bg="#7349b5">F</ChromeProfile>
        <RunningDot $active />
      </TaskSlot>
      <Tray>
        <TrayIcon $w={30}><ChevronUp size={26} /></TrayIcon>
        <TrayIcon $w={52} $gap={8}><TrayCloud /></TrayIcon>
        <TrayIcon $w={44}><TrayNetwork /></TrayIcon>
        <TrayIcon $w={24}><Volume2 size={28} /></TrayIcon>
        <TrayIcon $w={52}><TrayBattery /></TrayIcon>
        <Clock>2:42 AM<br />8/30/2025</Clock>
        <BellSlot><Bell size={28} /></BellSlot>
      </Tray>
    </Taskbar>
  </Page>
);

export default App;
